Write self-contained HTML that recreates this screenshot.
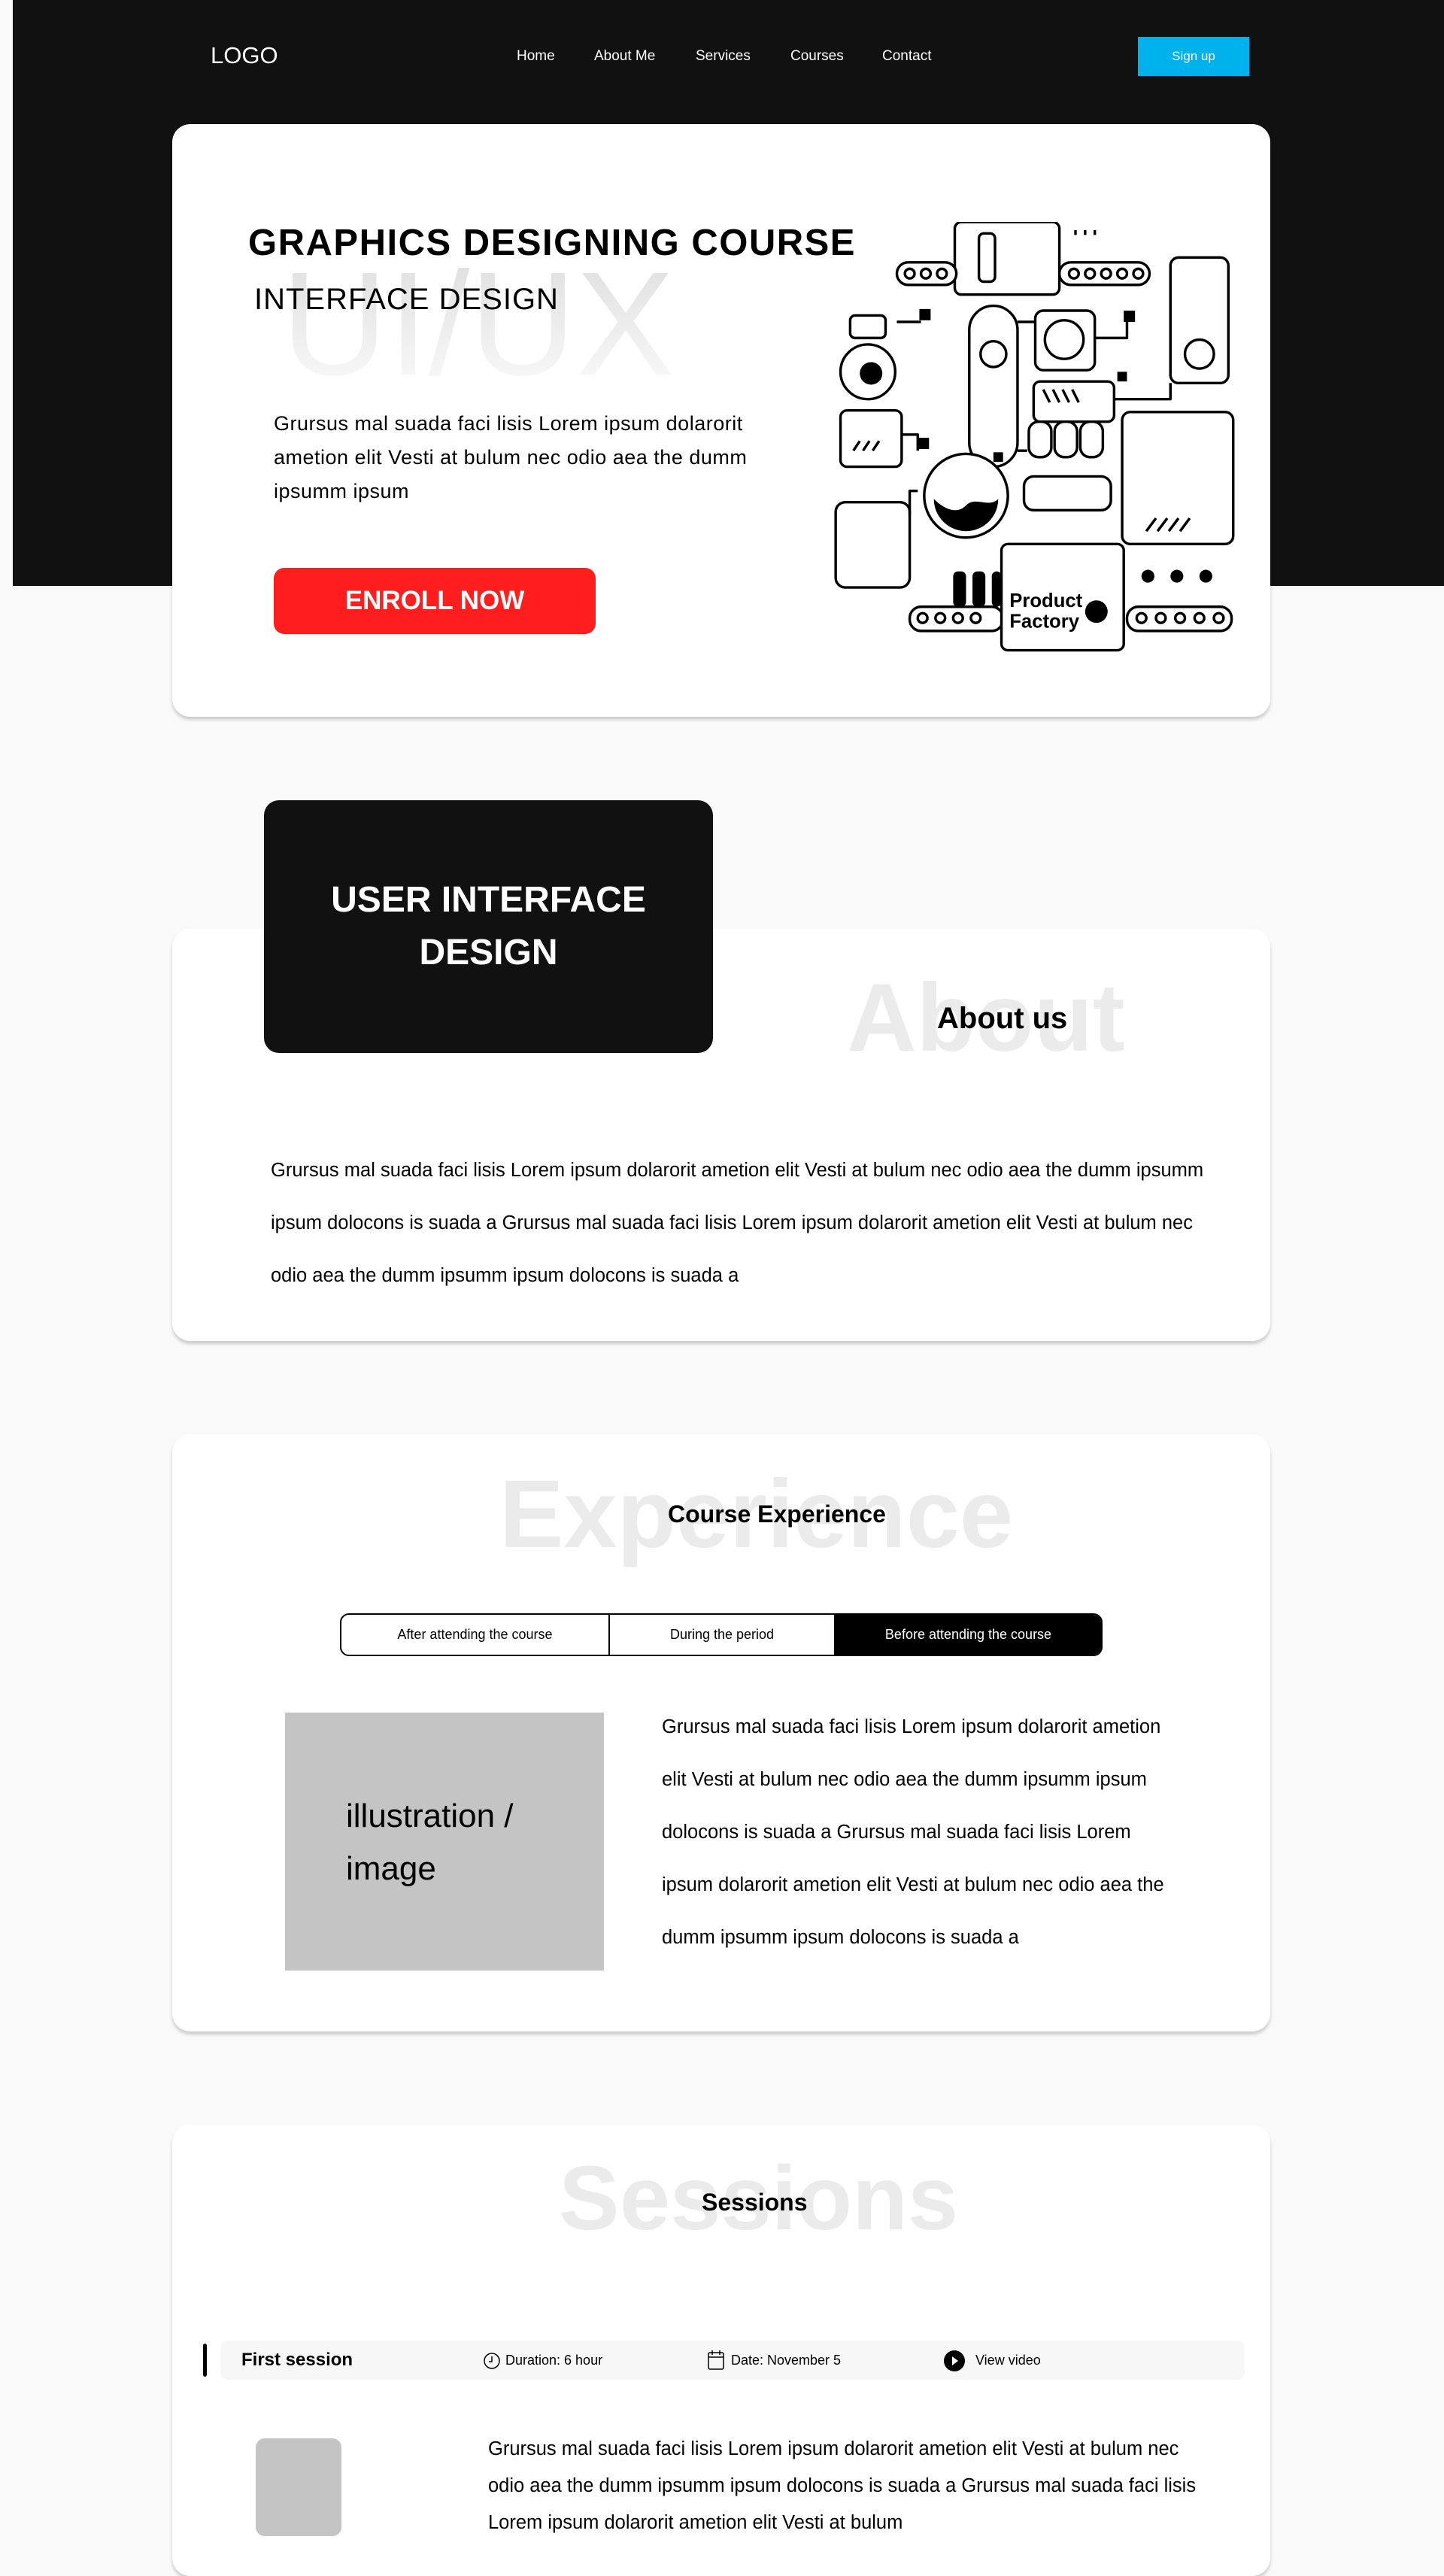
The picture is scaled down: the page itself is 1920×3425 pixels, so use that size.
<!DOCTYPE html>
<html><head><meta charset="utf-8"><style>
*{margin:0;padding:0;box-sizing:border-box}
body{width:1920px;height:3356px;background:#f9f9f9;font-family:"Liberation Sans",sans-serif;position:relative;overflow:hidden;color:#000}
.a{position:absolute;white-space:nowrap}
.card{position:absolute;background:#fff;border-radius:24px;box-shadow:0 4px 4px rgba(0,0,0,.18)}
.nav{position:absolute;top:64px;color:#fff;font-size:19px}
.wm{position:absolute;color:#ebebeb;font-weight:bold;white-space:nowrap;line-height:1}
.p{font-size:25.5px;line-height:70px}
</style></head><body>
<div class="a" style="left:17px;top:0;width:1903px;height:779px;background:#111"></div>
<div class="a" style="left:280px;top:56px;color:#fff;font-size:31px">LOGO</div>
<div class="nav" style="left:687px">Home</div>
<div class="nav" style="left:790px">About Me</div>
<div class="nav" style="left:925px">Services</div>
<div class="nav" style="left:1051px">Courses</div>
<div class="nav" style="left:1173px">Contact</div>
<div class="a" style="left:1513px;top:49px;width:148px;height:52px;background:#00b2ec;color:#fff;font-size:17px;line-height:52px;text-align:center">Sign up</div>

<div class="card" style="left:229px;top:165px;width:1460px;height:788px"></div>
<div class="wm" style="left:374px;top:333px;font-size:196px;font-weight:normal;background:linear-gradient(#dedede,#fbfbfb);-webkit-background-clip:text;color:transparent">UI/UX</div>
<div class="a" style="left:330px;top:295px;font-size:49px;font-weight:bold;letter-spacing:1.5px">GRAPHICS DESIGNING COURSE</div>
<div class="a" style="left:338px;top:376px;font-size:40px;letter-spacing:1px">INTERFACE DESIGN</div>
<div class="a" style="left:364px;top:541px;font-size:27px;letter-spacing:.5px;line-height:45px">Grursus mal suada faci lisis Lorem ipsum dolarorit<br>ametion elit Vesti at bulum nec odio aea the dumm<br>ipsumm ipsum</div>
<div class="a" style="left:364px;top:755px;width:428px;height:88px;background:#ff1e1e;border-radius:14px;color:#fff;font-size:35px;font-weight:bold;text-align:center;line-height:88px">ENROLL NOW</div>

<svg class="a" style="left:1109px;top:295px" width="535" height="572" viewBox="518 138 250 267" fill="none" stroke="#000" stroke-width="1.6" stroke-linejoin="round">
<g fill="#fff">
<rect x="593" y="138" width="65" height="45" rx="4"/>
<rect x="557" y="163" width="37" height="14" rx="7"/>
<rect x="658" y="163" width="56" height="14" rx="7"/>
<rect x="727" y="160" width="36" height="78" rx="5"/>
<circle cx="539" cy="231" r="17"/>
<rect x="528" y="196" width="22" height="14" rx="3"/>
<rect x="643" y="193" width="37" height="37" rx="5"/>
<rect x="602" y="190" width="30" height="100" rx="15"/>
<rect x="642" y="237" width="50" height="25" rx="4"/>
<rect x="522" y="255" width="38" height="35" rx="4"/>
<rect x="697" y="256" width="69" height="82" rx="5"/>
<circle cx="600" cy="308" r="26"/>
<rect x="636" y="296" width="54" height="21" rx="6"/>
<rect x="519" y="312" width="46" height="53" rx="6"/>
<rect x="565" y="377" width="58" height="15" rx="7"/>
<rect x="700" y="377" width="65" height="15" rx="7"/>
<rect x="622" y="338" width="76" height="66" rx="4"/>
<rect x="639" y="262" width="14" height="22" rx="6"/><rect x="655" y="262" width="14" height="22" rx="6"/><rect x="671" y="262" width="14" height="22" rx="6"/>
</g>
<g fill="#000" stroke="none">
<rect x="571" y="192" width="7" height="7"/><rect x="698" y="193" width="7" height="7"/><rect x="694" y="231" width="6" height="6"/>
<rect x="570" y="272" width="7" height="7"/><rect x="617" y="281" width="6" height="6"/>
<path d="M580 310a20 20 0 0 0 40 0c-6 6-14-2-20 4s-14 2-20-4z"/>
<rect x="592" y="355" width="8" height="22" rx="3"/><rect x="604" y="355" width="8" height="22" rx="3"/><rect x="616" y="355" width="6" height="22" rx="3"/>
<circle cx="681" cy="380" r="7"/>
<circle cx="713" cy="358" r="4"/><circle cx="731" cy="358" r="4"/><circle cx="749" cy="358" r="4"/>
<circle cx="541" cy="232" r="7"/>
</g>
<g>
<circle cx="565" cy="170" r="3"/><circle cx="575" cy="170" r="3"/><circle cx="585" cy="170" r="3"/>
<circle cx="667" cy="170" r="3"/><circle cx="677" cy="170" r="3"/><circle cx="687" cy="170" r="3"/><circle cx="697" cy="170" r="3"/><circle cx="707" cy="170" r="3"/>
<circle cx="573" cy="384" r="3"/><circle cx="584" cy="384" r="3"/><circle cx="595" cy="384" r="3"/><circle cx="606" cy="384" r="3"/>
<circle cx="709" cy="384" r="3"/><circle cx="721" cy="384" r="3"/><circle cx="733" cy="384" r="3"/><circle cx="745" cy="384" r="3"/><circle cx="757" cy="384" r="3"/>
<circle cx="661" cy="211" r="12"/><circle cx="617" cy="220" r="8"/><circle cx="745" cy="220" r="9"/>
<path d="M557 200h15M632 200h11M680 210h20v-10M692 248h35v-10M565 320v-15h5M560 270h10v10M632 280h6"/>
<path d="M648 242l4 8M654 242l4 8M660 242l4 8M666 242l4 8M712 330l6-8M719 330l6-8M726 330l6-8M733 330l6-8M530 280l4-6M536 280l4-6M542 280l4-6"/>
<rect x="608" y="145" width="10" height="30" rx="3"/>
<path d="M668 143v3M674 143v3M680 143v3"/>
</g>
<text x="627" y="377" font-family="Liberation Sans" font-weight="bold" font-size="12" fill="#000" stroke="none">Product</text>
<text x="627" y="390" font-family="Liberation Sans" font-weight="bold" font-size="12" fill="#000" stroke="none">Factory</text>
</svg>

<div class="card" style="left:229px;top:1235px;width:1460px;height:548px"></div>
<div class="a" style="left:351px;top:1064px;width:597px;height:336px;background:#111;border-radius:20px;color:#fff;font-size:48px;font-weight:bold;text-align:center;line-height:70px;padding-top:98px">USER INTERFACE<br>DESIGN</div>
<div class="wm" style="left:1126px;top:1290px;font-size:128px">About</div>
<div class="a" style="left:1246px;top:1332px;font-size:40px;font-weight:bold">About us</div>
<div class="a p" style="left:360px;top:1521px">Grursus mal suada faci lisis Lorem ipsum dolarorit ametion elit Vesti at bulum nec odio aea the dumm ipsumm<br>ipsum dolocons is suada a Grursus mal suada faci lisis Lorem ipsum dolarorit ametion elit Vesti at bulum nec<br>odio aea the dumm ipsumm ipsum dolocons is suada a</div>

<div class="card" style="left:229px;top:1907px;width:1460px;height:794px"></div>
<div class="wm" style="left:664px;top:1950px;font-size:128px">Experience</div>
<div class="a" style="left:888px;top:1995px;font-size:32px;font-weight:bold">Course Experience</div>
<div class="a" style="left:452px;top:2145px;width:1014px;height:57px;border:2px solid #000;border-radius:12px;overflow:hidden;font-size:18px;line-height:53px">
<div class="a" style="left:0;top:0;width:357px;height:53px;text-align:center;border-right:2px solid #000">After attending the course</div>
<div class="a" style="left:357px;top:0;width:298px;height:53px;text-align:center">During the period</div>
<div class="a" style="left:655px;top:0;width:357px;height:53px;text-align:center;background:#000;color:#fff">Before attending the course</div>
</div>
<div class="a" style="left:379px;top:2277px;width:424px;height:343px;background:#c4c4c4"></div>
<div class="a" style="left:460px;top:2380px;font-size:44px;line-height:70px">illustration /<br>image</div>
<div class="a p" style="left:880px;top:2261px">Grursus mal suada faci lisis Lorem ipsum dolarorit ametion<br>elit Vesti at bulum nec odio aea the dumm ipsumm ipsum<br>dolocons is suada a Grursus mal suada faci lisis Lorem<br>ipsum dolarorit ametion elit Vesti at bulum nec odio aea the<br>dumm ipsumm ipsum dolocons is suada a</div>

<div class="card" style="left:229px;top:2825px;width:1460px;height:600px"></div>
<div class="wm" style="left:743px;top:2862px;font-size:121px">Sessions</div>
<div class="a" style="left:933px;top:2910px;font-size:32px;font-weight:bold">Sessions</div>
<div class="a" style="left:270px;top:3116px;width:5px;height:44px;background:#000;border-radius:3px"></div>
<div class="a" style="left:293px;top:3112px;width:1362px;height:52px;background:#f7f7f7;border-radius:10px"></div>
<div class="a" style="left:321px;top:3124px;font-size:24px;font-weight:bold">First session</div>
<svg class="a" style="left:642px;top:3127px" width="24" height="24" viewBox="0 0 24 24" fill="none" stroke="#000" stroke-width="1.5"><circle cx="12" cy="12" r="10"/><path d="M12 6v7H8"/></svg>
<div class="a" style="left:672px;top:3128px;font-size:18px">Duration: 6 hour</div>
<svg class="a" style="left:940px;top:3124px" width="24" height="28" viewBox="0 0 24 28" fill="none" stroke="#000" stroke-width="1.5"><rect x="2" y="4" width="20" height="22" rx="2"/><path d="M2 10h20M7 1v6M17 1v6"/></svg>
<div class="a" style="left:972px;top:3128px;font-size:18px">Date: November 5</div>
<svg class="a" style="left:1254px;top:3124px" width="30" height="30" viewBox="0 0 30 30"><circle cx="15" cy="15" r="14" fill="#000"/><path d="M12 9l8 6-8 6z" fill="#fff"/></svg>
<div class="a" style="left:1297px;top:3128px;font-size:18px">View video</div>
<div class="a" style="left:340px;top:3242px;width:114px;height:130px;background:#c4c4c4;border-radius:12px"></div>
<div class="a" style="left:649px;top:3232px;font-size:25.5px;line-height:49px">Grursus mal suada faci lisis Lorem ipsum dolarorit ametion elit Vesti at bulum nec<br>odio aea the dumm ipsumm ipsum dolocons is suada a Grursus mal suada faci lisis<br>Lorem ipsum dolarorit ametion elit Vesti at bulum</div>
</body></html>
